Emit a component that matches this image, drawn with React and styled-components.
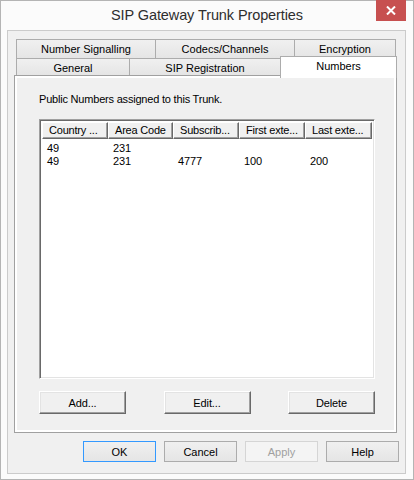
import React from "react";
import styled, { createGlobalStyle } from "styled-components";

const Global = createGlobalStyle`
  html, body { margin: 0; padding: 0; background: #ffffff; }
  * { box-sizing: border-box; }
`;

const Window = styled.div`
  width: 414px;
  height: 480px;
  border: 1px solid #b4b4b4;
  background: #fbfbfb;
  display: flex;
  flex-direction: column;
  font-family: "Liberation Sans", Arial, sans-serif;
  color: #000;
`;

const TitleBar = styled.div`
  height: 29px;
  display: grid;
  grid-template-columns: 1fr auto 1fr;
  align-items: start;
`;

const Title = styled.div`
  grid-column: 2;
  padding-top: 6px;
  font-size: 14.5px;
  color: #2e2e2e;
  letter-spacing: -0.1px;
`;

const CloseButton = styled.div`
  grid-column: 3;
  justify-self: end;
  margin-top: -1px;
  margin-right: 7px;
  width: 30px;
  height: 21px;
  background: #c75050;
  display: flex;
  align-items: center;
  justify-content: center;
`;

const Client = styled.div`
  flex: 1;
  margin: 0 7px 5px 6px;
  border: 1px solid #cbcbcb;
  background: #f0f0f0;
  display: flex;
  flex-direction: column;
  padding-top: 8px;
`;

const TabRow = styled.div`
  display: flex;
  align-items: flex-start;
  margin-left: 8px;
  margin-top: ${(p) => (p.$second ? "-1px" : "0")};
`;

const Tab = styled.div`
  width: ${(p) => p.$w}px;
  height: ${(p) => (p.$active ? 22 : p.$top ? 20 : 18)}px;
  margin-left: ${(p) => (p.$first ? "0" : "-1px")};
  margin-top: ${(p) => (p.$active ? "-2px" : "0")};
  margin-bottom: ${(p) => (p.$active ? "-4px" : "0")};
  border: 1px solid #acacac;
  border-bottom: ${(p) => (p.$active ? "none" : "1px solid #acacac")};
  background: ${(p) =>
    p.$active ? "#ffffff" : "linear-gradient(#f0f0f0, #e5e5e5)"};
  position: ${(p) => (p.$active ? "relative" : "static")};
  z-index: ${(p) => (p.$active ? 1 : "auto")};
  display: flex;
  justify-content: center;
  padding-top: 2px;
  font-size: 11px;
  color: #000;
  line-height: 14px;
`;

const Panel = styled.div`
  margin-left: 6px;
  width: 383px;
  height: 358px;
  margin-top: -1px;
  border: 1px solid #a0a0a0;
  box-shadow: inset 0 0 0 2px #ffffff;
  background: #f0f0f0;
  display: flex;
  flex-direction: column;
  padding: 17px 0 0 24px;
`;

const Caption = styled.div`
  font-size: 11px;
  letter-spacing: -0.2px;
  line-height: 13px;
  height: 13px;
`;

const ListView = styled.div`
  margin-top: 13px;
  width: 336px;
  height: 260px;
  background: #ffffff;
  border: 1px solid;
  border-color: #a0a0a0 #ffffff #ffffff #a0a0a0;
  box-shadow: inset 1px 1px 0 #696969, inset -1px -1px 0 #e3e3e3;
  padding: 2px 2px 0 2px;
  display: flex;
  flex-direction: column;
`;

const HeaderRow = styled.div`
  display: flex;
  height: 17px;
`;

const HeaderCell = styled.div`
  width: ${(p) => p.$w}px;
  flex: none;
  background: #f0f0f0;
  border-top: 1px solid #ffffff;
  border-left: 1px solid #ffffff;
  border-right: 1px solid #696969;
  border-bottom: 1px solid #696969;
  box-shadow: inset -1px -1px 0 #a0a0a0;
  padding-left: 6px;
  font-size: 11px;
  letter-spacing: -0.2px;
  line-height: 14px;
  white-space: nowrap;
  overflow: hidden;
`;

const Row = styled.div`
  display: flex;
  height: 13px;
  margin-top: ${(p) => (p.$first ? "3px" : "0")};
`;

const Cell = styled.div`
  width: ${(p) => p.$w}px;
  flex: none;
  padding-left: 5px;
  font-size: 11px;
  line-height: 13px;
  letter-spacing: -0.1px;
`;

const PanelButtons = styled.div`
  margin-top: 12px;
  width: 336px;
  display: flex;
  justify-content: space-between;
`;

const ClassicButton = styled.div`
  width: 87px;
  height: 23px;
  background: #f0f0f0;
  border: 1px solid;
  border-color: #ffffff #696969 #696969 #ffffff;
  box-shadow: inset -1px -1px 0 #a0a0a0, inset 1px 1px 0 #e3e3e3;
  display: flex;
  align-items: center;
  justify-content: center;
  font-size: 11px;
  letter-spacing: -0.1px;
`;

const DialogButtons = styled.div`
  display: flex;
  justify-content: flex-end;
  gap: 8px;
  margin: 8px 6px 0 0;
`;

const DialogButton = styled.div`
  width: 73px;
  height: 21px;
  border: 1px solid
    ${(p) => (p.$default ? "#3399ff" : p.$disabled ? "#d5d5d5" : "#acacac")};
  background: ${(p) =>
    p.$disabled ? "#f4f4f4" : "linear-gradient(#f0f0f0, #e5e5e5)"};
  color: ${(p) => (p.$disabled ? "#a0a0a0" : "#000")};
  display: flex;
  align-items: center;
  justify-content: center;
  font-size: 11px;
`;

const columns = [
  { title: "Country ...", w: 66 },
  { title: "Area Code", w: 65 },
  { title: "Subscrib...", w: 66 },
  { title: "First exte...", w: 66 },
  { title: "Last exte...", w: 67 },
];

const rows = [
  ["49", "231", "", "", ""],
  ["49", "231", "4777", "100", "200"],
];

const topTabs = [
  { label: "Number Signalling", w: 140 },
  { label: "Codecs/Channels", w: 140 },
  { label: "Encryption", w: 102 },
];

const bottomTabs = [
  { label: "General", w: 114 },
  { label: "SIP Registration", w: 152 },
  { label: "Numbers", w: 117, active: true },
];

export default function App() {
  return (
    <>
      <Global />
      <Window>
        <TitleBar>
          <Title>SIP Gateway Trunk Properties</Title>
          <CloseButton>
            <svg width="10" height="9" viewBox="0 0 10 9">
              <path d="M1 0.5 L9 8.5 M9 0.5 L1 8.5" stroke="#fff" strokeWidth="2" />
            </svg>
          </CloseButton>
        </TitleBar>
        <Client>
          <TabRow>
            {topTabs.map((t, i) => (
              <Tab key={t.label} $w={t.w} $first={i === 0} $top>
                {t.label}
              </Tab>
            ))}
          </TabRow>
          <TabRow $second>
            {bottomTabs.map((t, i) => (
              <Tab key={t.label} $w={t.w} $first={i === 0} $active={t.active}>
                {t.label}
              </Tab>
            ))}
          </TabRow>
          <Panel>
            <Caption>Public Numbers assigned to this Trunk.</Caption>
            <ListView>
              <HeaderRow>
                {columns.map((c) => (
                  <HeaderCell key={c.title} $w={c.w}>
                    {c.title}
                  </HeaderCell>
                ))}
              </HeaderRow>
              {rows.map((r, ri) => (
                <Row key={ri} $first={ri === 0}>
                  {r.map((v, ci) => (
                    <Cell key={ci} $w={columns[ci].w}>
                      {v}
                    </Cell>
                  ))}
                </Row>
              ))}
            </ListView>
            <PanelButtons>
              <ClassicButton>Add...</ClassicButton>
              <ClassicButton>Edit...</ClassicButton>
              <ClassicButton>Delete</ClassicButton>
            </PanelButtons>
          </Panel>
          <DialogButtons>
            <DialogButton $default>OK</DialogButton>
            <DialogButton>Cancel</DialogButton>
            <DialogButton $disabled>Apply</DialogButton>
            <DialogButton>Help</DialogButton>
          </DialogButtons>
        </Client>
      </Window>
    </>
  );
}
